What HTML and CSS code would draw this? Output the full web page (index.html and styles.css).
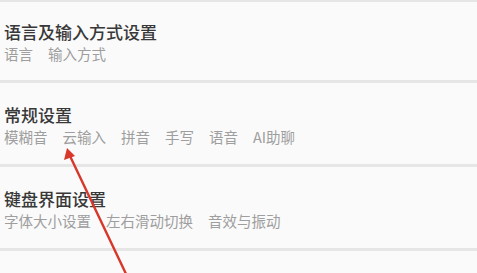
FILE: index.html
```html
<!DOCTYPE html>
<html lang="zh-CN">
<head>
    <meta charset="UTF-8">
    <meta name="viewport" content="width=device-width, initial-scale=1.0">
    <title>输入法设置</title>
    <link rel="stylesheet" href="styles.css">
</head>
<body>
    <div class="settings">
        <div class="card first">
            <div class="card-title">语言及输入方式设置</div>
            <div class="card-items">
                <span>语言</span>
                <span>输入方式</span>
            </div>
        </div>
        <div class="card">
            <div class="card-title">常规设置</div>
            <div class="card-items">
                <span>模糊音</span>
                <span>云输入</span>
                <span>拼音</span>
                <span>手写</span>
                <span>语音</span>
                <span>AI助聊</span>
            </div>
        </div>
        <div class="card">
            <div class="card-title">键盘界面设置</div>
            <div class="card-items">
                <span>字体大小设置</span>
                <span>左右滑动切换</span>
                <span>音效与振动</span>
            </div>
        </div>
        <div class="card rest"></div>
    </div>

    <!-- annotation arrow -->
    <svg class="arrow" width="477" height="273" viewBox="0 0 477 273">
        <line x1="127" y1="276" x2="70" y2="156" stroke="#d8372a" stroke-width="2.4" stroke-linecap="round"/>
        <polygon points="67,148 64,160 75,156" fill="#d8372a"/>
    </svg>
</body>
</html>
```

FILE: styles.css
```css
body {
    margin: 0;
    padding: 0;
    background-color: #e6e6e6;
    font-family: "Noto Sans CJK SC", "Noto Sans", sans-serif;
    overflow: hidden;
}
.settings {
    display: flex;
    flex-direction: column;
    gap: 3px;
    padding-top: 2px;
    height: 100vh;
    box-sizing: border-box;
}
.card {
    background-color: #fafafa;
    padding: 22px 4px 18px;
    height: 41px;
    flex-shrink: 0;
}
.card.first {
    padding-top: 20px;
    padding-bottom: 17px;
}
.card.rest {
    flex: 1;
    height: auto;
    padding: 0;
}
.card-title {
    font-size: 17px;
    line-height: 20px;
    font-weight: 500;
    color: #383838;
}
.card-items {
    display: flex;
    gap: 15px;
    margin-top: 3px;
    font-size: 14.5px;
    line-height: 18px;
    color: #9e9e9e;
}
.arrow {
    position: absolute;
    left: 0;
    top: 0;
}
```
